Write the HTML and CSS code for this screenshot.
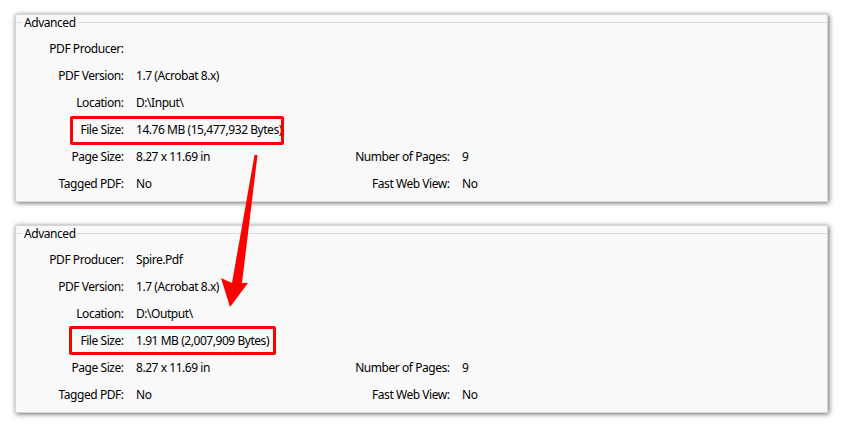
FILE: index.html
```html
<!DOCTYPE html>
<html>
<head>
<meta charset="utf-8">
<link rel="stylesheet" href="styles.css">
</head>
<body>
<div class="page">
  <section class="panel">
    <div class="group-title"><span>Advanced</span></div>
    <div class="props">
      <div class="lbl">PDF Producer:</div><div class="val span3"></div>
      <div class="lbl">PDF Version:</div><div class="val span3">1.7 (Acrobat 8.x)</div>
      <div class="lbl">Location:</div><div class="val span3">D:\Input\</div>
      <div class="lbl">File Size:</div><div class="val span3">14.76 MB (15,477,932 Bytes)</div>
      <div class="lbl">Page Size:</div><div class="val">8.27 x 11.69 in</div><div class="lbl">Number of Pages:</div><div class="val">9</div>
      <div class="lbl">Tagged PDF:</div><div class="val">No</div><div class="lbl">Fast Web View:</div><div class="val">No</div>
    </div>
    <div class="mark mark-top"></div>
  </section>
  <section class="panel">
    <div class="group-title"><span>Advanced</span></div>
    <div class="props">
      <div class="lbl">PDF Producer:</div><div class="val span3">Spire.Pdf</div>
      <div class="lbl">PDF Version:</div><div class="val span3">1.7 (Acrobat 8.x)</div>
      <div class="lbl">Location:</div><div class="val span3">D:\Output\</div>
      <div class="lbl">File Size:</div><div class="val span3">1.91 MB (2,007,909 Bytes)</div>
      <div class="lbl">Page Size:</div><div class="val">8.27 x 11.69 in</div><div class="lbl">Number of Pages:</div><div class="val">9</div>
      <div class="lbl">Tagged PDF:</div><div class="val">No</div><div class="lbl">Fast Web View:</div><div class="val">No</div>
    </div>
    <div class="mark mark-bottom"></div>
  </section>
  <svg class="arrow" width="842" height="428" viewBox="0 0 842 428">
    <polygon points="254.5,155 257.5,155 242,283 248,283 230,307 221,278 232,283" fill="#ff0000"/>
  </svg>
</div>
</body>
</html>
```
FILE: styles.css
```css
html, body {
  margin: 0;
  padding: 0;
  background: #ffffff;
}
body {
  font-family: "Noto Sans", "DejaVu Sans", sans-serif;
  font-size: 12px;
  letter-spacing: -0.45px;
  color: #000;
}
.page {
  position: relative;
  width: 842px;
  height: 428px;
  padding: 14px 0 0 15px;
  box-sizing: border-box;
  display: flex;
  flex-direction: column;
  gap: 23px;
}
.panel {
  position: relative;
  width: 813px;
  box-sizing: border-box;
  background: #f9f9f9;
  border: 1px solid #d6d6d6;
  box-shadow: 1px 1px 5px rgba(0, 0, 0, 0.6);
  padding-bottom: 4px;
}
.group-title {
  display: flex;
  align-items: center;
  height: 15px;
  line-height: 15px;
}
.group-title::before {
  content: "";
  width: 6px;
  border-top: 1px solid #dcdcdc;
}
.group-title::after {
  content: "";
  flex: 1;
  border-top: 1px solid #dcdcdc;
}
.group-title span {
  padding: 0 2px;
}
.props {
  margin-top: 5px;
  display: grid;
  grid-template-columns: 108px 212px 114px 1fr;
  grid-auto-rows: 27px;
  align-items: center;
}
.lbl {
  text-align: right;
  padding-right: 0.45px;
}
.val {
  padding-left: 12px;
}
.span3 {
  grid-column: 2 / 5;
}
.mark {
  position: absolute;
  border: 3px solid #ff0000;
  border-radius: 2px;
  box-sizing: border-box;
  height: 29px;
}
.mark-top {
  left: 54px;
  top: 101px;
  width: 214px;
}
.mark-bottom {
  left: 53px;
  top: 100px;
  width: 207px;
}
.arrow {
  position: absolute;
  left: 0;
  top: 0;
  pointer-events: none;
}
```
